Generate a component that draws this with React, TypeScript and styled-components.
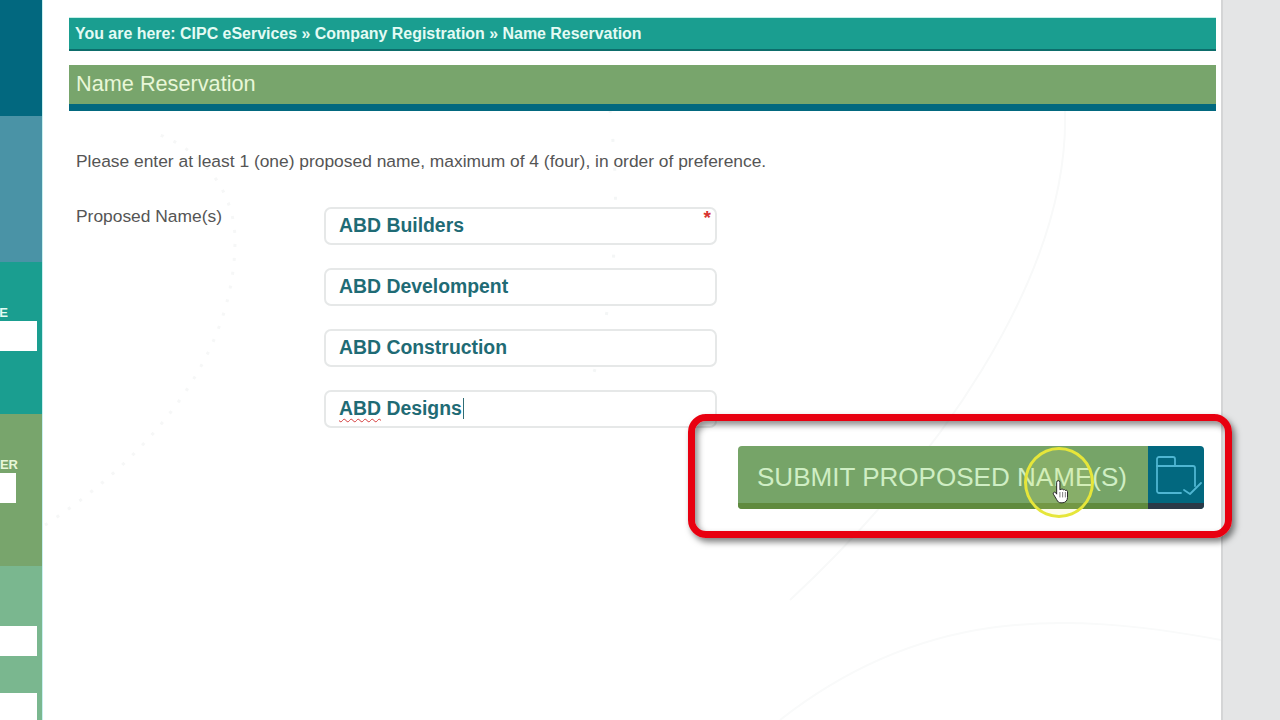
import React from "react";
import styled, { createGlobalStyle } from "styled-components";

const Global = createGlobalStyle`
  html, body { margin: 0; padding: 0; height: 100%; overflow: hidden; background: #fff; }
  #root { height: 720px; }
  * { box-sizing: border-box; }
`;
const Page = styled.div`
  position: relative; display: flex; width: 1280px; height: 720px; overflow: hidden;
  font-family: "Liberation Sans", Arial, sans-serif;
`;
const Sidebar = styled.aside`
  width: 43px; flex: none; display: flex; flex-direction: column; overflow: hidden;
  border-right: 1px solid #c8f0f0;
`;
const Section = styled.div<{ $bg: string; $h: number; $pad?: number }>`
  flex: none; height: ${p => p.$h}px; background: ${p => p.$bg}; padding-top: ${p => p.$pad ?? 0}px;
`;
const SideLabel = styled.div<{ $right: number; $color: string }>`
  width: ${p => p.$right}px; height: 14px; overflow: hidden; direction: rtl;
  font-size: 13px; line-height: 14px; font-weight: bold; color: ${p => p.$color}; white-space: nowrap;
`;
const SideInput = styled.div<{ $w: number; $mt?: number }>`
  width: ${p => p.$w}px; height: 30px; background: #fff; margin-top: ${p => p.$mt ?? 0}px;
`;
const Main = styled.main`
  position: relative; width: 1178px; flex: none; background: #fff; padding: 17px 5px 0 26px;
`;
const Waves = styled.svg`
  position: absolute; left: -43px; top: 0; width: 1280px; height: 720px; pointer-events: none;
`;
const Content = styled.div`
  position: relative; display: flex; flex-direction: column;
`;
const Breadcrumb = styled.div`
  height: 34px; background: #1a9e90; border-bottom: 2px solid #0d6d6b; border-top: 1px solid #c4f0e8;
  padding-left: 6px; font-size: 15.95px; line-height: 32px; font-weight: bold; color: #e4fbf4; white-space: nowrap;
`;
const Title = styled.h1`
  margin: 14px 0 0; height: 46px; background: #78a56c; border-bottom: 7px solid #02687f;
  padding-left: 7px; font-size: 21.7px; line-height: 37px; font-weight: normal; color: #e8f7d8;
`;
const Intro = styled.p`
  margin: 40px 0 0 7px; font-size: 17.4px; line-height: 20px; color: #555;
`;
const FormRow = styled.div`
  display: flex; margin: 36px 0 0 7px;
`;
const FieldLabel = styled.div`
  width: 248px; flex: none; font-size: 17.4px; line-height: 18px; color: #555;
`;
const Fields = styled.div`
  display: flex; flex-direction: column; gap: 23px;
`;
const Field = styled.div`
  position: relative; width: 393px; height: 38px; background: #fff; border: 2px solid #e6e8e8; border-radius: 7px;
  padding-left: 13px; font-size: 19.4px; line-height: 33px; font-weight: bold; color: #1f6b75; white-space: nowrap;
`;
const Star = styled.span`
  position: absolute; right: 4px; top: 0; font-size: 19px; line-height: 18px; color: #d8332f;
`;
const Misspelled = styled.span`
  text-decoration: underline wavy #d43c3c 1px; text-underline-offset: 3px;
`;
const Caret = styled.span`
  display: inline-block; width: 1px; height: 21px; background: #2f6d75; vertical-align: -4px; margin-left: 1px;
`;
const ButtonRow = styled.div`
  display: flex; justify-content: flex-end; margin: 18px 12px 0 0;
`;
const SubmitButton = styled.button`
  display: flex; width: 466px; height: 63px; padding: 0; border: 0; border-radius: 4px; overflow: hidden;
  font-family: inherit; background: none;
`;
const ButtonLabel = styled.span`
  flex: 1; height: 100%; background: #76a468; border-bottom: 6px solid #5f8a3e; padding-left: 19px;
  font-size: 26.05px; line-height: 62px; color: #cfeec4; text-align: left; white-space: nowrap;
`;
const ButtonIcon = styled.span`
  width: 56px; height: 100%; background: #02687f; border-bottom: 6px solid #2a3a48;
  display: flex; align-items: flex-start; justify-content: center; padding-top: 10px;
`;
const Gutter = styled.div`
  flex: 1; background: #e4e5e6; border-left: 2px solid #d4d5d6;
`;
const Highlight = styled.div`
  position: absolute; left: 688px; top: 414px; width: 544px; height: 124px;
  border: 7px solid #e80010; border-radius: 18px; pointer-events: none;
  box-shadow: 3px 4px 6px rgba(0,0,0,.5), inset 3px 4px 6px rgba(0,0,0,.45);
`;
const Ring = styled.div`
  position: absolute; left: 1024px; top: 447px; width: 70px; height: 71px; border-radius: 50%;
  border: 3px solid #e6e63a; background: rgba(240,240,110,.14); pointer-events: none;
`;
const Cursor = styled.svg`
  position: absolute; left: 1051px; top: 479px; width: 20px; height: 26px; pointer-events: none;
`;

const names = ["ABD Builders", "ABD Develompent", "ABD Construction"];

export default function App() {
  return (
    <Page>
      <Global />
      <Sidebar>
        <Section $bg="#02687f" $h={116} />
        <Section $bg="#4a93a6" $h={146} />
        <Section $bg="#1a9e90" $h={152} $pad={44}>
          <SideLabel $right={8} $color="#e4fbf4">NAME</SideLabel>
          <SideInput $w={37} $mt={1} />
        </Section>
        <Section $bg="#78a56c" $h={152} $pad={44}>
          <SideLabel $right={18} $color="#e8f7d8">NUMBER</SideLabel>
          <SideInput $w={16} $mt={1} />
        </Section>
        <Section $bg="#7ab78f" $h={154} $pad={60}>
          <SideInput $w={37} />
          <SideInput $w={37} $mt={37} />
        </Section>
      </Sidebar>
      <Main>
        <Waves viewBox="0 0 1280 720" fill="none">
          <path d="M45 525C130 470 235 370 235 240C235 190 200 150 160 135" stroke="#f6f7f7" strokeWidth="3" strokeDasharray="3 11" />
          <path d="M610 110C620 200 620 300 580 420" stroke="#f4f6f6" strokeWidth="3" strokeDasharray="3 26" />
          <path d="M1065 110C1070 280 930 470 790 600" stroke="#f8f9f9" strokeWidth="2" />
          <path d="M1221 640C1060 610 920 610 780 720" stroke="#f9fafa" strokeWidth="2" />
        </Waves>
        <Content>
          <Breadcrumb>You are here: CIPC eServices » Company Registration » Name Reservation</Breadcrumb>
          <Title>Name Reservation</Title>
          <Intro>Please enter at least 1 (one) proposed name, maximum of 4 (four), in order of preference.</Intro>
          <FormRow>
            <FieldLabel>Proposed Name(s)</FieldLabel>
            <Fields>
              {names.map((n, i) => (
                <Field key={n}>
                  {n}
                  {i === 0 && <Star>*</Star>}
                </Field>
              ))}
              <Field>
                <Misspelled>ABD</Misspelled> Designs<Caret />
              </Field>
            </Fields>
          </FormRow>
          <ButtonRow>
            <SubmitButton>
              <ButtonLabel>SUBMIT PROPOSED NAME(S)</ButtonLabel>
              <ButtonIcon>
                <svg width="52" height="42" viewBox="0 0 52 42" fill="none" stroke="#4fb6d2" strokeWidth="1.8" strokeLinejoin="round" strokeLinecap="round">
                  <path d="M31 37H9a2 2 0 0 1-2-2V3a2 2 0 0 1 2-2h14a2 2 0 0 1 2 2v7h18a2 2 0 0 1 2 2v18" />
                  <path d="M7 10h18" />
                  <path d="M34 34l6 4 11-11" />
                </svg>
              </ButtonIcon>
            </SubmitButton>
          </ButtonRow>
        </Content>
      </Main>
      <Gutter />
      <Highlight />
      <Ring />
      <Cursor viewBox="0 0 18 24">
        <path d="M5 3a1.5 1.5 0 0 1 3 0v7l1-.5a1.4 1.4 0 0 1 2 .5 1.4 1.4 0 0 1 2 .6 1.3 1.3 0 0 1 2 .9V17c0 3-2 5-5 5H9c-2 0-3-1-4-3l-3-5c-.8-1.4 1-2.500 2-1.500l1 1.500Z" fill="#fff" stroke="#222" strokeWidth=".9" strokeLinejoin="round" />
        <path d="M8 12v5M10.500 12v5M13 12v5" stroke="#555" strokeWidth=".7" />
      </Cursor>
    </Page>
  );
}
